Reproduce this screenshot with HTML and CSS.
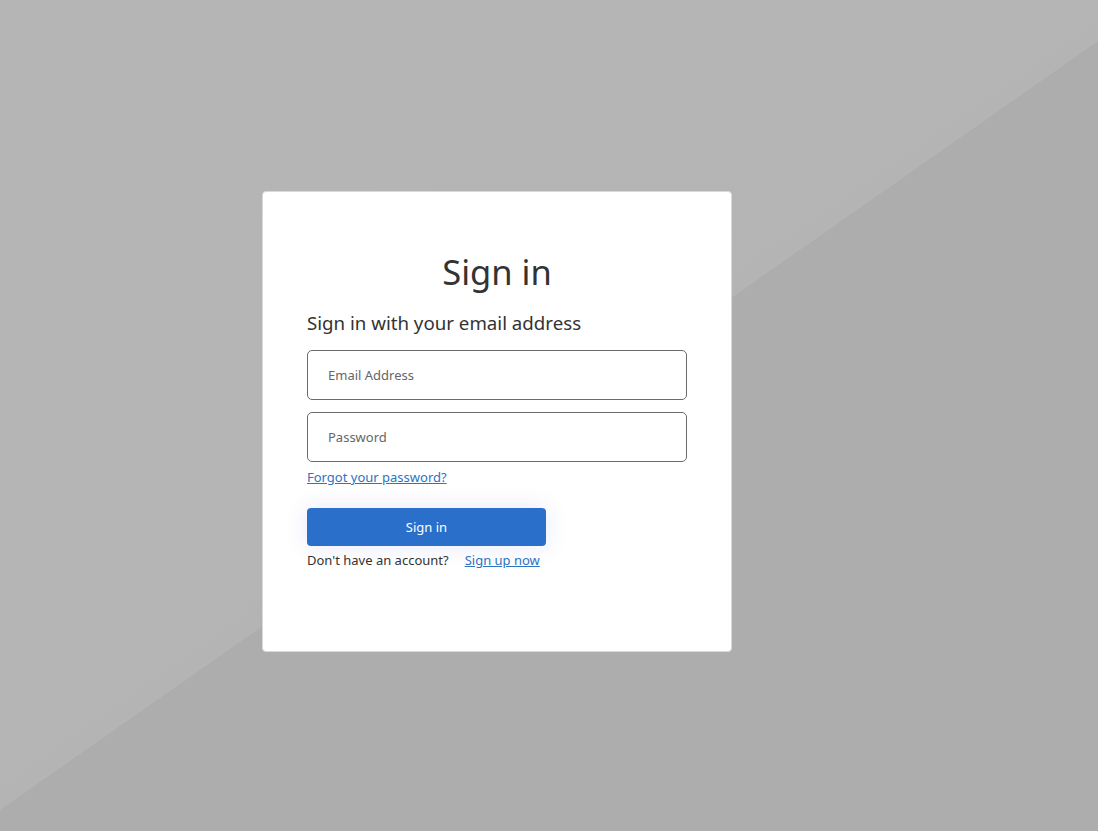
FILE: index.html
```html
<!DOCTYPE html>
<html lang="en">
<head>
<meta charset="utf-8">
<title>Sign in</title>
<link rel="stylesheet" href="styles.css">
</head>
<body>
<div class="page">
  <main class="card">
    <h1 class="title">Sign in</h1>
    <h2 class="subtitle">Sign in with your email address</h2>
    <form class="form">
      <input class="field" type="email" placeholder="Email Address">
      <input class="field field-last" type="password" placeholder="Password">
      <a class="link forgot" href="#">Forgot your password?</a>
      <button class="btn" type="button">Sign in</button>
      <div class="signup">
        <span>Don't have an account?</span>
        <a class="link" href="#">Sign up now</a>
      </div>
    </form>
  </main>
</div>
</body>
</html>
```
FILE: styles.css
```css
* { box-sizing: border-box; }
html, body { margin: 0; height: 100%; }
body {
  font-family: "Noto Sans", "Open Sans", sans-serif;
  color: #333;
  background:
    linear-gradient(145deg, rgba(255,255,255,0.02) 0%, rgba(255,255,255,0.03) 50.6%, rgba(0,0,0,0) 50.65%),
    linear-gradient(145deg, #b4b4b4 0%, #b2b2b2 50.6%, #adadad 50.65%, #adadad 100%);
}
.page {
  min-height: 100%;
  padding: 191px 0 0 262px;
}
.card {
  width: 470px;
  height: 461px;
  background: #fff;
  border: 1px solid #d9d9d9;
  border-radius: 4px;
  padding: 50px 44px 0 44px;
}
.title {
  margin: 0;
  text-align: center;
  font-weight: 400;
  font-size: 34.5px;
  line-height: 60px;
  color: #333;
}
.subtitle {
  margin: 0;
  font-weight: 400;
  font-size: 18.7px;
  line-height: 36px;
  margin-top: 3px;
  color: #333;
}
.form {
  display: flex;
  flex-direction: column;
  align-items: flex-start;
  margin-top: 9px;
}
.field {
  width: 380px;
  height: 50px;
  border: 1px solid #6b6b6b;
  border-radius: 5px;
  padding: 0 20px;
  font-family: inherit;
  font-size: 13px;
  color: #333;
  margin-bottom: 12px;
  outline: none;
}
.field-last { margin-bottom: 6px; }
.field::placeholder { color: #666; }
.link {
  color: #2b73c4;
  text-decoration: underline;
  font-size: 13px;
}
.forgot {
  line-height: 18px;
}
.btn {
  margin-top: 22px;
  width: 239px;
  height: 38px;
  border: none;
  border-radius: 4px;
  background: #2a6fca;
  color: #fff;
  font-family: inherit;
  font-size: 13px;
  box-shadow: 0 0 22px rgba(60,80,220,0.13);
}
.signup {
  display: flex;
  gap: 16px;
  margin-top: 5px;
  font-size: 13px;
  line-height: 18px;
}
```
